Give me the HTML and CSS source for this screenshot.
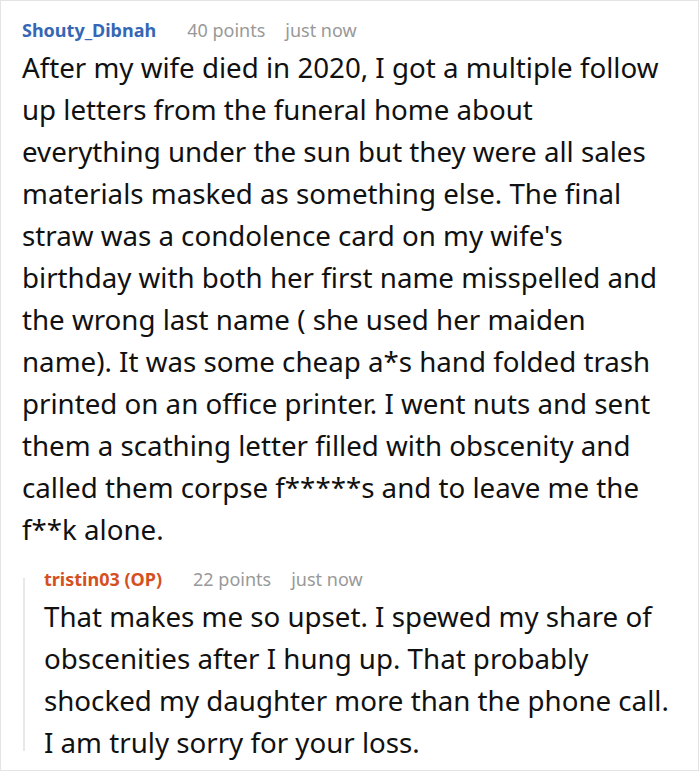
FILE: index.html
```html
<!DOCTYPE html>
<html>
<head>
<meta charset="utf-8">
<link rel="stylesheet" href="styles.css">
</head>
<body>
<div class="card">
  <div class="meta">
    <span class="user">Shouty_Dibnah</span>
    <span class="info">40 points</span>
    <span class="info">just now</span>
  </div>
  <p class="text">After my wife died in 2020, I got a multiple follow up letters from the funeral home about everything under the sun but they were all sales materials masked as something else. The final straw was a condolence card on my wife's birthday with both her first name misspelled and the wrong last name ( she used her maiden name). It was some cheap a*s hand folded trash printed on an office printer. I went nuts and sent them a scathing letter filled with obscenity and called them corpse f*****s and to leave me the f**k alone.</p>
  <div class="reply">
    <div class="meta">
      <span class="user op">tristin03 (OP)</span>
      <span class="info">22 points</span>
      <span class="info">just now</span>
    </div>
    <p class="text">That makes me so upset. I spewed my share of obscenities after I hung up. That probably shocked my daughter more than the phone call. I am truly sorry for your loss.</p>
  </div>
</div>
</body>
</html>
```
FILE: styles.css
```css
html, body {
  margin: 0;
  padding: 0;
  background: #fff;
}
.card {
  width: 699px;
  height: 771px;
  border: 1px solid #e4e4e4;
  padding: 17px 0 0 21px;
  box-sizing: border-box;
  font-family: "Noto Sans", sans-serif;
  color: #111;
}
.meta {
  display: flex;
  font-size: 18px;
  line-height: 24px;
  height: 24px;
}
.user {
  font-weight: 700;
  color: #3567b5;
  margin-right: 31px;
}
.user.op {
  color: #d4501f;
}
.info {
  color: #999;
  margin-right: 20px;
}
.text {
  margin: 4px 0 0 0;
  font-size: 27.7px;
  font-stretch: semi-condensed;
  line-height: 42px;
  width: 648px;
}
.reply {
  position: relative;
  margin-top: 17px;
  margin-left: 1px;
  padding-left: 21px;
}
.reply::before {
  content: "";
  position: absolute;
  left: 0;
  top: 11px;
  bottom: 12px;
  width: 2px;
  background: #e8e8e8;
}
.reply .text {
  width: 634px;
}
```
